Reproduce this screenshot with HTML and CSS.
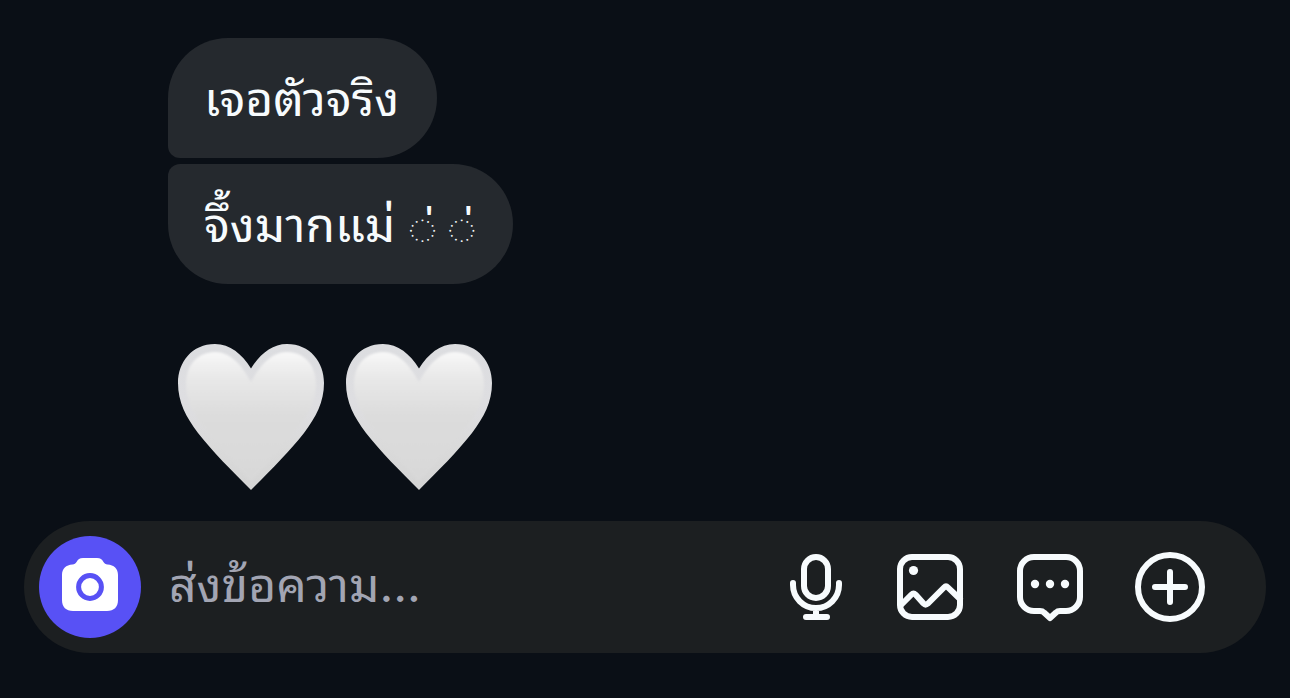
FILE: index.html
```html
<!DOCTYPE html>
<html lang="th">

<head>
  <meta charset="UTF-8">
  <meta name="viewport" content="width=device-width, initial-scale=1">
  <title>Chat</title>
  <link rel="stylesheet" href="styles.css">
</head>

<body>
  <!-- Shared heart drawing -->
  <svg class="defs" width="0" height="0" aria-hidden="true">
    <defs>
      <linearGradient id="heartBase" x1="0" y1="0" x2="0" y2="1">
        <stop offset="0" stop-color="#dcdde0" />
        <stop offset="0.4" stop-color="#dedee1" />
        <stop offset="0.7" stop-color="#dadada" />
        <stop offset="1" stop-color="#d4d4d4" />
      </linearGradient>
      <linearGradient id="heartShine" x1="0" y1="0" x2="0" y2="1">
        <stop offset="0" stop-color="#f8f8f8" />
        <stop offset="0.2" stop-color="#e8e8e8" />
        <stop offset="0.5" stop-color="#dcdcdc" />
        <stop offset="1" stop-color="#d8d8d8" />
      </linearGradient>
      <filter id="soft">
        <feGaussianBlur stdDeviation="1.2" />
      </filter>
      <symbol id="heart" viewBox="0 0 146 146">
        <path fill="url(#heartBase)" d="M73 24.500C64 10 52 0 37 0C14 0 0 18 0 39C0 58 8 73 20 89C34 107 54 127 73 146C92 127 112 107 126 89C138 73 146 58 146 39C146 18 132 0 109 0C94 0 82 10 73 24.500Z" />
        <path fill="url(#heartShine)" filter="url(#soft)" d="M73 38C63 20 52 8 37 8C19 8 8 22 8 40C8 56 15 69 26 84C38 100 56 119 73 137C90 119 108 100 120 84C131 69 138 56 138 40C138 22 127 8 109 8C94 8 83 20 73 38Z" />
      </symbol>
    </defs>
  </svg>

  <main class="thread">
    <div class="bubble first">เจอตัวจริง</div>
    <div class="bubble last">จึ้งมากแม่ <span class="marks">◌่ ◌่</span></div>
    <div class="hearts" role="img" aria-label="🤍🤍">
      <svg class="heart"><use href="#heart" /></svg>
      <svg class="heart"><use href="#heart" /></svg>
    </div>
  </main>

  <form class="composer">
    <button type="button" class="camera" aria-label="กล้อง">
      <svg width="60" height="60" viewBox="0 0 60 60">
        <path fill="#fff" d="M23 1H37C40.500 1 42 2.500 43.500 5C44.500 6.800 45.500 7.300 47.500 7.500C54 8 58 11.500 58 18V43C58 50 54 54 47 54H13C6 54 2 50 2 43V18C2 11.500 6 8 12.500 7.500C14.500 7.300 15.500 6.800 16.500 5C18 2.500 19.500 1 23 1Z" />
        <circle cx="30" cy="30" r="11.400" fill="none" stroke="#5851f5" stroke-width="5" />
      </svg>
    </button>

    <input class="message" type="text" placeholder="ส่งข้อความ..." aria-label="ส่งข้อความ">

    <div class="actions">
      <button type="button" class="action" aria-label="ไมโครโฟน">
        <svg width="60" height="72" viewBox="0 0 60 72">
          <rect x="18" y="6" width="24" height="41" rx="12" />
          <path d="M7 32V34A23 23 0 0 0 53 34V32M30 57V66M20 66H41" />
        </svg>
      </button>
      <button type="button" class="action" aria-label="รูปภาพ">
        <svg width="72" height="72" viewBox="0 0 72 72">
          <rect x="6" y="6" width="60" height="60" rx="12" />
          <path d="M7 54L17.500 43.500Q19.500 41.500 21.500 43.500L29.500 52.500Q31.500 54.500 34 52.500L50 36.500Q52 34.500 54 36.500L66 48" />
          <circle class="dot" cx="19.500" cy="19.500" r="4.600" />
        </svg>
      </button>
      <button type="button" class="action" aria-label="สติกเกอร์">
        <svg width="72" height="72" viewBox="0 0 72 72">
          <path d="M20 6H52A14 14 0 0 1 66 20V46A14 14 0 0 1 52 60H46Q43.500 60 42 61.500L36 67L30 61.500Q28.500 60 26 60H20A14 14 0 0 1 6 46V20A14 14 0 0 1 20 6Z" />
          <circle class="dot" cx="21" cy="33" r="4.200" />
          <circle class="dot" cx="36" cy="33" r="4.200" />
          <circle class="dot" cx="51" cy="33" r="4.200" />
        </svg>
      </button>
      <button type="button" class="action" aria-label="เพิ่ม">
        <svg width="72" height="72" viewBox="0 0 72 72">
          <circle cx="36" cy="36" r="32" />
          <path d="M36 21V51M21 36H51" />
        </svg>
      </button>
    </div>
  </form>
</body>

</html>
```
FILE: styles.css
```css
* {
  box-sizing: border-box;
}

body {
  margin: 0;
  min-height: 100vh;
  display: flex;
  flex-direction: column;
  background: #0a0f16;
  color: #f7fbfd;
  font-family: Inter, "Noto Sans Thai Looped", Loma, Garuda, "Noto Sans", sans-serif;
  font-size: 48px;
  line-height: 72px;
}

.defs {
  position: absolute;
}

.thread {
  flex: 1;
  display: flex;
  flex-direction: column;
  align-items: flex-start;
  gap: 6px;
  padding: 38px 24px 31px 168px;
}

.bubble {
  padding: 25px 38px 23px 36px;
  background: #25292e;
  border-radius: 60px;
}

.first {
  border-bottom-left-radius: 12px;
}

.last {
  border-top-left-radius: 12px;
}

.marks {
  font-size: 42px;
  line-height: 1;
}

.hearts {
  display: flex;
  gap: 22px;
  padding: 54px 10px 0;
}

.heart {
  width: 146px;
  height: 146px;
}

.composer {
  display: flex;
  align-items: center;
  min-height: 132px;
  margin: 0 24px 45px;
  margin-bottom: 46px;
  padding: 0 60px 0 15px;
  background: #1c1f21;
  border-radius: 66px;
}

button {
  padding: 0;
  border: none;
  background: none;
  cursor: pointer;
}

.camera {
  display: flex;
  align-items: center;
  justify-content: center;
  flex: none;
  width: 102px;
  height: 102px;
  border-radius: 50%;
  background: #5851f5;
}

.message {
  flex: 1;
  min-width: 0;
  height: 102px;
  padding: 0 28px 6px;
  border: none;
  outline: none;
  background: none;
  color: inherit;
  font: inherit;
}

.message::placeholder {
  color: #a2a5b3;
  opacity: 1;
}

.actions {
  display: flex;
  gap: 48px;
}

.action svg {
  display: block;
  fill: none;
  stroke: #f7fbfd;
  stroke-width: 6;
  stroke-linecap: round;
  stroke-linejoin: round;
}

.action .dot {
  fill: #f7fbfd;
  stroke: none;
}
```
